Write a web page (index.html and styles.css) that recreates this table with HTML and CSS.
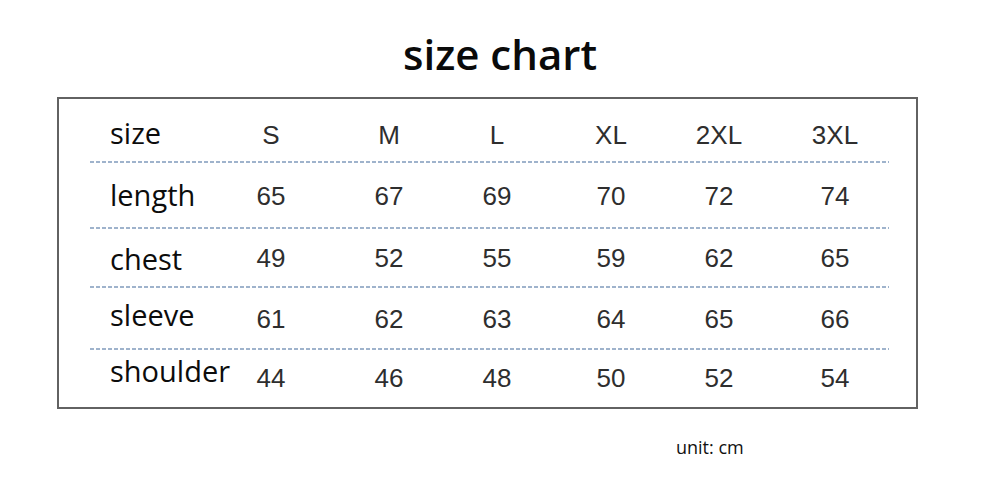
FILE: index.html
```html
<!DOCTYPE html>
<html lang="en">
<head>
<meta charset="utf-8">
<title>size chart</title>
<link rel="stylesheet" href="styles.css">
</head>
<body>
<h1 class="title">size chart</h1>
<div class="chart">
  <div class="row head">
    <div class="label">size</div>
    <div class="cell">S</div><div class="cell">M</div><div class="cell">L</div><div class="cell">XL</div><div class="cell">2XL</div><div class="cell">3XL</div>
  </div>
  <div class="row r2">
    <div class="label">length</div>
    <div class="cell">65</div><div class="cell">67</div><div class="cell">69</div><div class="cell">70</div><div class="cell">72</div><div class="cell">74</div>
  </div>
  <div class="row r3">
    <div class="label">chest</div>
    <div class="cell">49</div><div class="cell">52</div><div class="cell">55</div><div class="cell">59</div><div class="cell">62</div><div class="cell">65</div>
  </div>
  <div class="row r4">
    <div class="label">sleeve</div>
    <div class="cell">61</div><div class="cell">62</div><div class="cell">63</div><div class="cell">64</div><div class="cell">65</div><div class="cell">66</div>
  </div>
  <div class="row r5 last">
    <div class="label">shoulder</div>
    <div class="cell">44</div><div class="cell">46</div><div class="cell">48</div><div class="cell">50</div><div class="cell">52</div><div class="cell">54</div>
  </div>
</div>
<div class="unit">unit: cm</div>
</body>
</html>
```
FILE: styles.css
```css
html, body {
  margin: 0;
  padding: 0;
  background: #ffffff;
}
body {
  width: 1000px;
  height: 484px;
  overflow: hidden;
  font-family: "Open Sans", "Noto Sans", sans-serif;
  color: #111;
}
.title {
  margin: 0;
  padding-top: 24px;
  height: 60px;
  line-height: 60px;
  font-size: 42px;
  font-weight: 600;
  text-align: center;
  color: #0a0a0a;
}
.chart {
  box-sizing: border-box;
  margin: 13px 0 0 57px;
  width: 861px;
  height: 312px;
  border: 2px solid #626262;
  padding-left: 31px;
  display: flex;
  flex-direction: column;
}
.row {
  box-sizing: border-box;
  width: 799px;
  display: grid;
  grid-template-columns: 122px 118px 118px 98px 130px 86px 146px;
  align-items: center;
  background-image: repeating-linear-gradient(to right, #9fb3cc 0 4px, transparent 4px 6px);
  background-size: 100% 2px;
  background-repeat: no-repeat;
  background-position: left bottom;
}
.head { height: 64px; }
.r2 { height: 66px; }
.r3 { height: 59px; }
.r4 { height: 62px; }
.r5 { height: 57px; }
.last { background-image: none; }
.label {
  padding-left: 20px;
  font-size: 29px;
  color: #0c0c0c;
  white-space: nowrap;
}
.cell {
  text-align: center;
  font-family: "Liberation Sans", Arial, sans-serif;
  font-size: 26px;
  color: #2e2e2e;
}
.head .cell { padding-top: 8px; }
.head .label { padding-top: 2px; }
.r2 .label { padding-bottom: 4px; }
.r4 .label { padding-bottom: 9px; }
.r5 .label { padding-bottom: 17px; }
.unit {
  margin-top: 27px;
  padding-left: 676px;
  line-height: 22px;
  font-size: 18px;
  color: #111;
}
```
